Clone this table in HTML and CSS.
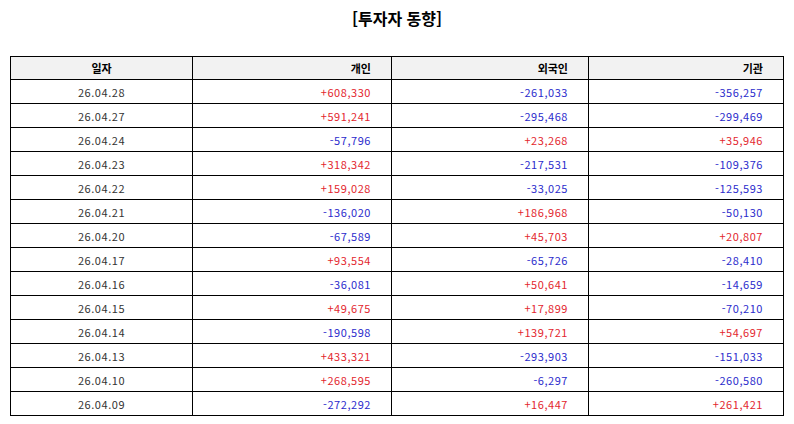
FILE: index.html
```html
<!DOCTYPE html>
<html lang="ko">
<head>
<meta charset="utf-8">
<title>투자자 동향</title>
<link rel="stylesheet" href="styles.css">
</head>
<body>
<h1 class="title">[투자자 동향]</h1>
<table class="flow">
  <colgroup>
    <col class="c-date"><col class="c-ind"><col class="c-for"><col class="c-inst">
  </colgroup>
  <thead>
    <tr><th class="center">일자</th><th>개인</th><th>외국인</th><th>기관</th></tr>
  </thead>
  <tbody>
    <tr><td class="date">26.04.28</td><td class="up">+608,330</td><td class="dn">-261,033</td><td class="dn">-356,257</td></tr>
    <tr><td class="date">26.04.27</td><td class="up">+591,241</td><td class="dn">-295,468</td><td class="dn">-299,469</td></tr>
    <tr><td class="date">26.04.24</td><td class="dn">-57,796</td><td class="up">+23,268</td><td class="up">+35,946</td></tr>
    <tr><td class="date">26.04.23</td><td class="up">+318,342</td><td class="dn">-217,531</td><td class="dn">-109,376</td></tr>
    <tr><td class="date">26.04.22</td><td class="up">+159,028</td><td class="dn">-33,025</td><td class="dn">-125,593</td></tr>
    <tr><td class="date">26.04.21</td><td class="dn">-136,020</td><td class="up">+186,968</td><td class="dn">-50,130</td></tr>
    <tr><td class="date">26.04.20</td><td class="dn">-67,589</td><td class="up">+45,703</td><td class="up">+20,807</td></tr>
    <tr><td class="date">26.04.17</td><td class="up">+93,554</td><td class="dn">-65,726</td><td class="dn">-28,410</td></tr>
    <tr><td class="date">26.04.16</td><td class="dn">-36,081</td><td class="up">+50,641</td><td class="dn">-14,659</td></tr>
    <tr><td class="date">26.04.15</td><td class="up">+49,675</td><td class="up">+17,899</td><td class="dn">-70,210</td></tr>
    <tr><td class="date">26.04.14</td><td class="dn">-190,598</td><td class="up">+139,721</td><td class="up">+54,697</td></tr>
    <tr><td class="date">26.04.13</td><td class="up">+433,321</td><td class="dn">-293,903</td><td class="dn">-151,033</td></tr>
    <tr><td class="date">26.04.10</td><td class="up">+268,595</td><td class="dn">-6,297</td><td class="dn">-260,580</td></tr>
    <tr><td class="date">26.04.09</td><td class="dn">-272,292</td><td class="up">+16,447</td><td class="up">+261,421</td></tr>
  </tbody>
</table>
</body>
</html>
```
FILE: styles.css
```css
html, body {
  margin: 0;
  padding: 0;
  background: #ffffff;
}
body {
  padding: 8px 10px 0 10px;
  font-family: "Noto Sans CJK KR", "Noto Sans", sans-serif;
  color: #222;
}
.title {
  margin: 0 0 28px 0;
  font-size: 16px;
  line-height: 20px;
  font-weight: 700;
  text-align: center;
  color: #000;
}
.flow {
  width: 100%;
  border-collapse: collapse;
  table-layout: fixed;
  font-size: 11px;
}
.c-date { width: 182px; }
.c-ind { width: 199px; }
.c-for { width: 197px; }
.c-inst { width: auto; }
.flow th, .flow td {
  border: 1px solid #000;
  padding: 0 20px 0 8px;
  text-align: right;
  line-height: 14px;
  box-sizing: border-box;
}
.flow th {
  background: #f2f2f2;
  font-weight: 700;
  color: #000;
  height: 23px;
}
.flow td {
  height: 24px;
  letter-spacing: 0.55px;
}
.flow th.center, .flow td.date {
  text-align: center;
  padding: 0;
}
.flow td.date { color: #333; }
.up { color: #e3262e; }
.dn { color: #2b2bcc; }
```
